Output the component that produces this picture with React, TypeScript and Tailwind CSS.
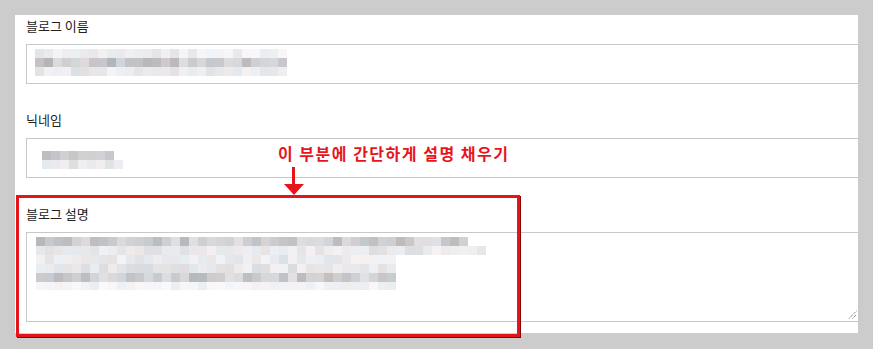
import type { ReactNode } from 'react';

const font = { fontFamily: '"Noto Sans CJK KR", "Noto Sans", sans-serif' };

type Row = { h: number; w: number; base: number; spread: number };

function makeRand(seed: number) {
  let s = seed;
  return () => {
    s = (s * 16807) % 2147483647;
    return s / 2147483647;
  };
}

// pixelated (mosaic) placeholder for the blurred-out text
function Mosaic({ rows, cell = 9, seed }: { rows: Row[]; cell?: number; seed: number }) {
  const rand = makeRand(seed);
  const width = Math.max(...rows.map((r) => r.w));
  const height = rows.reduce((a, r) => a + r.h, 0);
  const rects: ReactNode[] = [];
  let y = 0;
  rows.forEach((row, ri) => {
    for (let x = 0; x < row.w; x += cell) {
      const v = row.base + (rand() - 0.5) * row.spread;
      const t = (rand() - 0.5) * 10;
      const r = Math.round(Math.min(255, v + t));
      const g = Math.round(Math.min(255, v));
      const b = Math.round(Math.min(255, v - t * 0.5 + 3));
      rects.push(
        <rect key={`${ri}-${x}`} x={x} y={y} width={cell} height={row.h} fill={`rgb(${r},${g},${b})`} />
      );
    }
    y += row.h;
  });
  return (
    <svg width={width} height={height} className="block">
      {rects}
    </svg>
  );
}

function Label({ children }: { children: ReactNode }) {
  return <div className="h-[20px] text-[13px] leading-[20px] text-[#222]">{children}</div>;
}

export default function App() {
  return (
    <div className="h-[349px] w-[873px] overflow-hidden bg-[#cccccc] pt-[15px] pl-[15px]" style={font}>
      <div className="relative w-[843px] bg-white pt-[1px] pb-[11px] pl-[11px]">
        <div className="flex flex-col gap-[26px]">
          <div>
            <Label>블로그 이름</Label>
            <div className="mt-[8px] h-[40px] w-[834px] border border-[#c6c8ca] pt-[4px] pl-[8px]">
              <Mosaic
                seed={11}
                rows={[
                  { h: 9, w: 252, base: 238, spread: 18 },
                  { h: 9, w: 252, base: 200, spread: 40 },
                  { h: 9, w: 252, base: 234, spread: 20 },
                ]}
              />
            </div>
          </div>

          <div>
            <Label>닉네임</Label>
            <div className="mt-[8px] h-[40px] w-[834px] border border-[#c6c8ca] pt-[12px] pl-[15px]">
              <Mosaic
                seed={7}
                rows={[
                  { h: 9, w: 72, base: 202, spread: 26 },
                  { h: 9, w: 81, base: 230, spread: 20 },
                ]}
              />
            </div>
          </div>

          <div>
            <Label>블로그 설명</Label>
            <div className="relative mt-[8px] h-[90px] w-[834px] border border-[#c6c8ca] pt-[4px] pl-[9px]">
              <Mosaic
                seed={23}
                rows={[
                  { h: 9, w: 432, base: 205, spread: 40 },
                  { h: 9, w: 450, base: 232, spread: 20 },
                  { h: 9, w: 360, base: 234, spread: 18 },
                  { h: 9, w: 360, base: 230, spread: 22 },
                  { h: 9, w: 360, base: 205, spread: 40 },
                  { h: 8, w: 360, base: 243, spread: 12 },
                ]}
              />
              <svg width="9" height="9" className="absolute right-[2px] bottom-[2px]">
                <line x1="1" y1="8.5" x2="8.5" y2="1" stroke="#555" strokeWidth="1" strokeDasharray="1 1" />
                <line x1="4.5" y1="8.5" x2="8.5" y2="4.5" stroke="#555" strokeWidth="1" strokeDasharray="1 1" />
              </svg>
            </div>
          </div>
        </div>

        {/* annotation */}
        <div className="absolute top-[127px] left-[263px] text-[16px] font-bold leading-[22px] tracking-[1.5px] whitespace-nowrap text-[#e8141c]">
          이 부분에 간단하게 설명 채우기
        </div>
        <div className="absolute top-[152px] left-[277px] h-[19px] w-[3px] bg-[#e8141c]" />
        <svg width="20" height="11" className="absolute top-[169px] left-[269px]">
          <polygon points="0,0 20,0 10,11" fill="#e8141c" />
        </svg>
        <div className="absolute top-[180px] left-[1px] h-[142px] w-[504px] border-[3px] border-[#e3151a] shadow-[1px_1px_0_#8a0000]" />
      </div>
    </div>
  );
}
